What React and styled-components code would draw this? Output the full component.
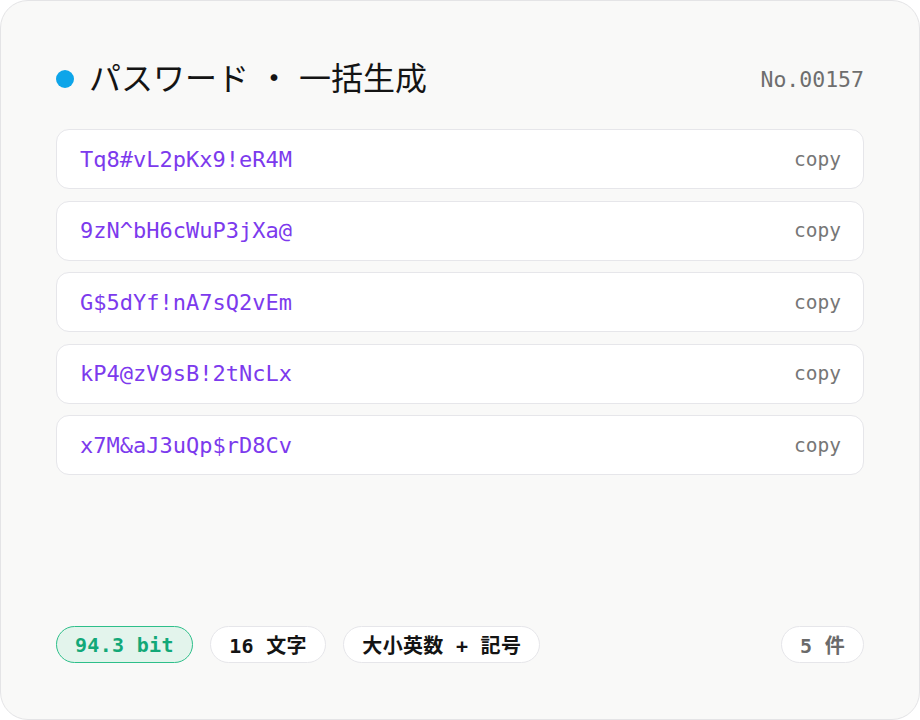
import React from "react"
import styled, { createGlobalStyle } from "styled-components"

const GlobalStyle = createGlobalStyle`
  html, body {
    margin: 0;
    padding: 0;
    background: #ffffff;
  }
  * {
    box-sizing: border-box;
  }
`

const mono = `"DejaVu Sans Mono", "Noto Sans CJK JP", monospace`

const Card = styled.div`
  width: 920px;
  height: 720px;
  padding: 54px 55px 56px 55px;
  background: #f9f9f8;
  border: 1px solid #e4e4e6;
  border-radius: 28px;
  display: flex;
  flex-direction: column;
`

const Header = styled.div`
  display: flex;
  align-items: center;
  justify-content: space-between;
  height: 48px;
  margin-bottom: 26px;
`

const TitleGroup = styled.div`
  display: flex;
  align-items: center;
  gap: 15px;
`

const Dot = styled.span`
  width: 18px;
  height: 18px;
  border-radius: 50%;
  background: #0ea5e9;
`

const Title = styled.h1`
  margin: 0;
  font-family: Inter, "Noto Sans CJK JP", sans-serif;
  font-size: 32px;
  font-weight: 400;
  color: #141414;
  line-height: 48px;
`

const Serial = styled.span`
  font-family: ${mono};
  font-size: 21.5px;
  color: #6e6e6e;
`

const List = styled.div`
  display: flex;
  flex-direction: column;
  gap: 11.5px;
`

const Row = styled.div`
  height: 60px;
  display: flex;
  align-items: center;
  justify-content: space-between;
  padding: 0 22px 0 23px;
  background: #ffffff;
  border: 1px solid #e6e6ea;
  border-radius: 13px;
`

const Password = styled.span`
  font-family: ${mono};
  font-size: 22px;
  color: #7c3aed;
`

const Copy = styled.span`
  font-family: ${mono};
  font-size: 19.5px;
  color: #767676;
`

const Spacer = styled.div`
  flex: 1;
`

const Footer = styled.div`
  display: flex;
  align-items: center;
  gap: 17.5px;
`

const Chip = styled.span`
  height: 37px;
  display: inline-flex;
  align-items: center;
  padding: 0 18px;
  border-radius: 999px;
  font-family: ${mono};
  font-size: 20px;
  font-weight: 700;
  letter-spacing: 0.3px;
  white-space: pre;
  color: ${(p) => (p.$tone === "green" ? "#13a878" : p.$tone === "muted" ? "#6a6a6a" : "#141414")};
  background: ${(p) => (p.$tone === "green" ? "#e3f4ec" : "#ffffff")};
  border: 1px solid ${(p) => (p.$tone === "green" ? "#2ebf8a" : "#e6e6ea")};
  margin-left: ${(p) => (p.$push ? "auto" : "0")};
`

const passwords = [
  "Tq8#vL2pKx9!eR4M",
  "9zN^bH6cWuP3jXa@",
  "G$5dYf!nA7sQ2vEm",
  "kP4@zV9sB!2tNcLx",
  "x7M&aJ3uQp$rD8Cv",
]

export default function App() {
  return (
    <>
      <GlobalStyle />
      <Card>
        <Header>
          <TitleGroup>
            <Dot />
            <Title>パスワード ・ 一括生成</Title>
          </TitleGroup>
          <Serial>No.00157</Serial>
        </Header>
        <List>
          {passwords.map((pw) => (
            <Row key={pw}>
              <Password>{pw}</Password>
              <Copy>copy</Copy>
            </Row>
          ))}
        </List>
        <Spacer />
        <Footer>
          <Chip $tone="green">94.3 bit</Chip>
          <Chip>16 文字</Chip>
          <Chip>大小英数 + 記号</Chip>
          <Chip $tone="muted" $push>5 件</Chip>
        </Footer>
      </Card>
    </>
  )
}
